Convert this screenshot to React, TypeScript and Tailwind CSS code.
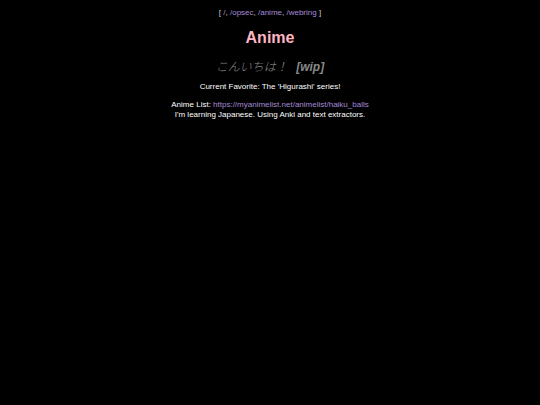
export default function App() {
  return (
    <div className="min-h-[405px] bg-black text-white text-center text-[8px] leading-[10px] font-['Liberation_Sans',Arial,sans-serif] pt-[8px]">
      <p className="text-[#c8c8c8]">
        [ <a className="text-[#a58ad6]">/</a>, <a className="text-[#a58ad6]">/opsec</a>,{" "}
        <a className="text-[#a58ad6]">/anime</a>, <a className="text-[#a58ad6]">/webring</a> ]
      </p>
      <h1 className="mt-[10px] text-[16px] leading-[20px] font-bold text-[#ffb6c1]">Anime</h1>
      <h2 className="mt-[11px] text-[12px] leading-[14px] italic text-[#8a8a8a]">
        <span className="font-['Noto_Sans_CJK_JP',sans-serif] font-light">こんいちは！</span>{" "}
        <b className="ml-[5px]">[wip]</b>
      </h2>
      <p className="mt-[8px]">Current Favorite: The 'Higurashi' series!</p>
      <p className="mt-[8px]">
        Anime List: <a className="text-[#a58ad6]">https://myanimelist.net/animelist/haiku_balls</a>
      </p>
      <p>I'm learning Japanese. Using Anki and text extractors.</p>
    </div>
  );
}
